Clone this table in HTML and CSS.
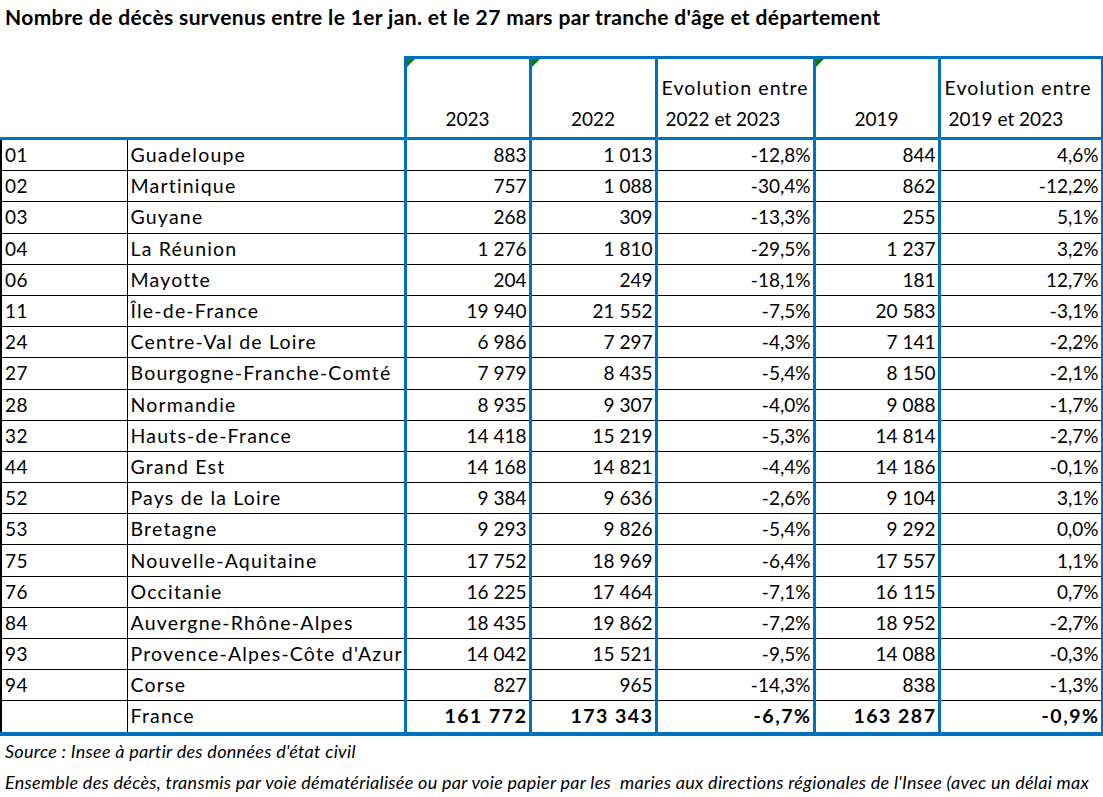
FILE: index.html
```html
<!DOCTYPE html>
<html lang="fr">
<head>
<meta charset="utf-8">
<title>Nombre de décès</title>
<link rel="stylesheet" href="styles.css">
</head>
<body>
<h1 class="title">Nombre de décès survenus entre le 1er jan. et le 27 mars par tranche d'âge et département</h1>
<table class="grid">
  <colgroup>
    <col class="c-code"><col class="c-name"><col class="c-num"><col class="c-num2"><col class="c-evo"><col class="c-num"><col class="c-evo2">
  </colgroup>
  <thead>
    <tr class="head">
      <th class="blank"></th>
      <th class="blank"></th>
      <th class="hy"><span class="flag"></span>2023</th>
      <th class="hy"><span class="flag"></span>2022</th>
      <th class="he"><span class="l1">Evolution entre</span><span class="l2">2022 et 2023</span></th>
      <th class="hy"><span class="flag"></span>2019</th>
      <th class="he"><span class="l1">Evolution entre</span><span class="l2">2019 et 2023</span></th>
    </tr>
  </thead>
  <tbody>
    <tr><td class="code">01</td><td class="name">Guadeloupe</td><td class="n">883</td><td class="n">1 013</td><td class="n">-12,8%</td><td class="n">844</td><td class="n">4,6%</td></tr>
    <tr><td class="code">02</td><td class="name">Martinique</td><td class="n">757</td><td class="n">1 088</td><td class="n">-30,4%</td><td class="n">862</td><td class="n">-12,2%</td></tr>
    <tr><td class="code">03</td><td class="name">Guyane</td><td class="n">268</td><td class="n">309</td><td class="n">-13,3%</td><td class="n">255</td><td class="n">5,1%</td></tr>
    <tr><td class="code">04</td><td class="name">La Réunion</td><td class="n">1 276</td><td class="n">1 810</td><td class="n">-29,5%</td><td class="n">1 237</td><td class="n">3,2%</td></tr>
    <tr><td class="code">06</td><td class="name">Mayotte</td><td class="n">204</td><td class="n">249</td><td class="n">-18,1%</td><td class="n">181</td><td class="n">12,7%</td></tr>
    <tr><td class="code">11</td><td class="name">Île-de-France</td><td class="n">19 940</td><td class="n">21 552</td><td class="n">-7,5%</td><td class="n">20 583</td><td class="n">-3,1%</td></tr>
    <tr><td class="code">24</td><td class="name">Centre-Val de Loire</td><td class="n">6 986</td><td class="n">7 297</td><td class="n">-4,3%</td><td class="n">7 141</td><td class="n">-2,2%</td></tr>
    <tr><td class="code">27</td><td class="name">Bourgogne-Franche-Comté</td><td class="n">7 979</td><td class="n">8 435</td><td class="n">-5,4%</td><td class="n">8 150</td><td class="n">-2,1%</td></tr>
    <tr><td class="code">28</td><td class="name">Normandie</td><td class="n">8 935</td><td class="n">9 307</td><td class="n">-4,0%</td><td class="n">9 088</td><td class="n">-1,7%</td></tr>
    <tr><td class="code">32</td><td class="name">Hauts-de-France</td><td class="n">14 418</td><td class="n">15 219</td><td class="n">-5,3%</td><td class="n">14 814</td><td class="n">-2,7%</td></tr>
    <tr><td class="code">44</td><td class="name">Grand Est</td><td class="n">14 168</td><td class="n">14 821</td><td class="n">-4,4%</td><td class="n">14 186</td><td class="n">-0,1%</td></tr>
    <tr><td class="code">52</td><td class="name">Pays de la Loire</td><td class="n">9 384</td><td class="n">9 636</td><td class="n">-2,6%</td><td class="n">9 104</td><td class="n">3,1%</td></tr>
    <tr><td class="code">53</td><td class="name">Bretagne</td><td class="n">9 293</td><td class="n">9 826</td><td class="n">-5,4%</td><td class="n">9 292</td><td class="n">0,0%</td></tr>
    <tr><td class="code">75</td><td class="name">Nouvelle-Aquitaine</td><td class="n">17 752</td><td class="n">18 969</td><td class="n">-6,4%</td><td class="n">17 557</td><td class="n">1,1%</td></tr>
    <tr><td class="code">76</td><td class="name">Occitanie</td><td class="n">16 225</td><td class="n">17 464</td><td class="n">-7,1%</td><td class="n">16 115</td><td class="n">0,7%</td></tr>
    <tr><td class="code">84</td><td class="name">Auvergne-Rhône-Alpes</td><td class="n">18 435</td><td class="n">19 862</td><td class="n">-7,2%</td><td class="n">18 952</td><td class="n">-2,7%</td></tr>
    <tr><td class="code">93</td><td class="name">Provence-Alpes-Côte d'Azur</td><td class="n">14 042</td><td class="n">15 521</td><td class="n">-9,5%</td><td class="n">14 088</td><td class="n">-0,3%</td></tr>
    <tr><td class="code">94</td><td class="name">Corse</td><td class="n">827</td><td class="n">965</td><td class="n">-14,3%</td><td class="n">838</td><td class="n">-1,3%</td></tr>
    <tr class="total"><td class="code"></td><td class="name">France</td><td class="n">161 772</td><td class="n">173 343</td><td class="n">-6,7%</td><td class="n">163 287</td><td class="n">-0,9%</td></tr>
  </tbody>
</table>
<p class="note">Source : Insee à partir des données d'état civil</p>
<p class="note note2">Ensemble des décès, transmis par voie dématérialisée ou par voie papier par les&nbsp; maries aux directions régionales de l'Insee (avec un délai max</p>
</body>
</html>
```

FILE: styles.css
```css
html, body {
  margin: 0;
  padding: 0;
  background: #ffffff;
  overflow: hidden;
}
body {
  width: 1103px;
  height: 797px;
  font-family: "Lato", "Liberation Sans", sans-serif;
  color: #000000;
  white-space: nowrap;
}
.title {
  margin: 0;
  padding: 4px 0 0 5px;
  height: 36px;
  box-sizing: border-box;
  font-size: 21px;
  font-weight: 700;
  line-height: 26px;
  letter-spacing: 0.37px;
}
.grid {
  margin-top: 20px;
  border-collapse: collapse;
  table-layout: fixed;
  width: 1101px;
  font-size: 19px;
}
.c-code { width: 126px; }
.c-name { width: 278px; }
.c-num { width: 125px; }
.c-num2 { width: 126px; }
.c-evo { width: 158px; }
.c-evo2 { width: 163px; }

.head th {
  height: 75px;
  padding: 0 2px 3px 2px;
  vertical-align: bottom;
  font-weight: 400;
  line-height: 31px;
  border-top: 3px solid #0070c0;
  border-left: 3px solid #0070c0;
  border-right: 3px solid #0070c0;
  border-bottom: 3px solid #0070c0;
  position: relative;
}
.head th.blank {
  border-top: none;
  border-left: none;
  border-right: none;
}
.hy { text-align: center; }
.he { text-align: left; }
.he .l1, .he .l2 { display: block; }
.he .l1 {
  padding-left: 2px;
  font-size: 19.5px;
  letter-spacing: 1.1px;
}
.he .l2 { padding-left: 6px; }
.flag {
  position: absolute;
  top: 0;
  left: 0;
  width: 0;
  height: 0;
  border-top: 8px solid #008000;
  border-right: 8px solid transparent;
}

tbody td {
  height: 30.2px;
  padding: 0 2px;
  line-height: 20px;
  vertical-align: middle;
  border-top: 1px solid #000000;
  border-bottom: 1px solid #000000;
  overflow: hidden;
}
td.code {
  padding-left: 3px;
  border-left: 2px solid #000000;
  border-right: 1px solid #000000;
  letter-spacing: 0.5px;
}
td.name {
  padding-left: 3px;
  font-size: 19.5px;
  letter-spacing: 1.2px;
  border-right: 3px solid #0070c0;
}
td.n {
  text-align: right;
  border-right: 3px solid #0070c0;
}
tr.total td {
  border-bottom: 4px solid #0070c0;
}
tr.total td.n {
  font-weight: 700;
  font-size: 19.5px;
  letter-spacing: 1.5px;
  padding-right: 1px;
}

.note {
  margin: 0;
  padding-left: 5px;
  font-style: italic;
  font-size: 18px;
  letter-spacing: 0.28px;
  line-height: 31px;
}
```
